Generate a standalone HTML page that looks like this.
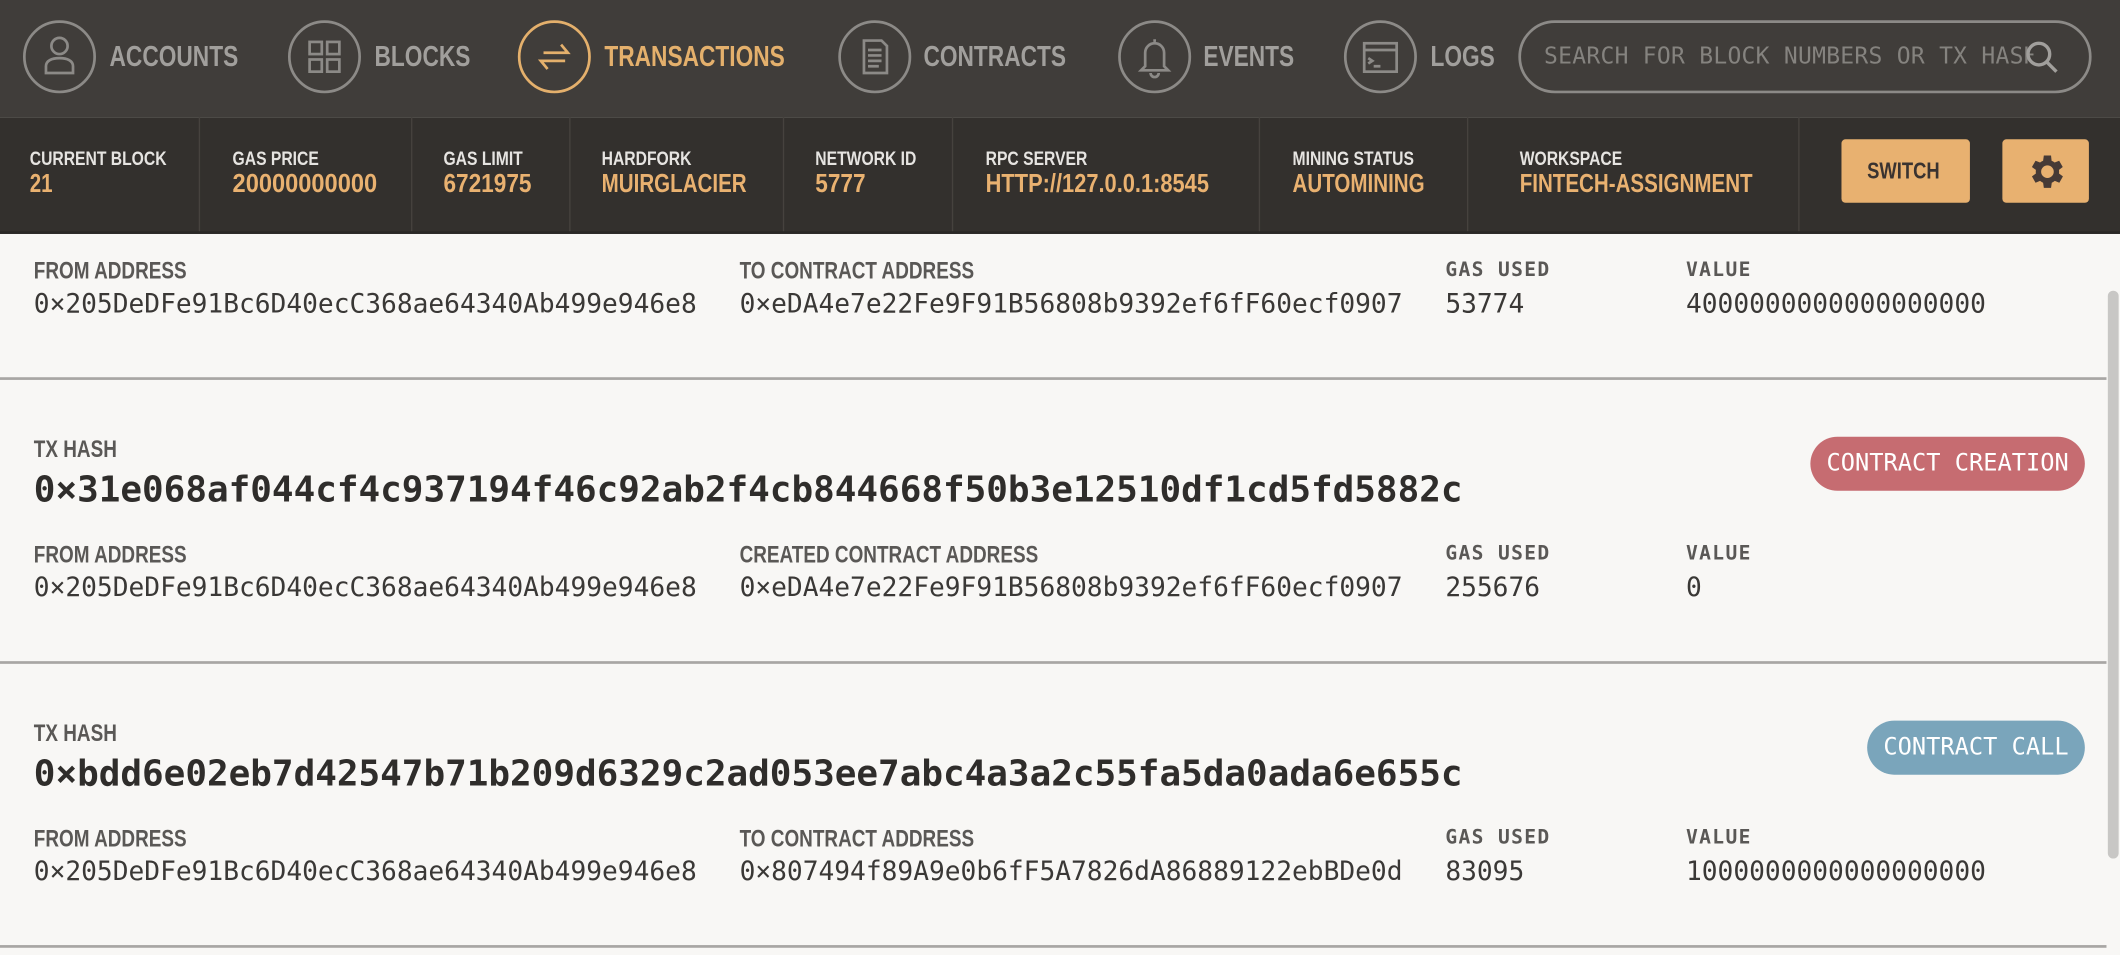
<!DOCTYPE html>
<html><head><meta charset="utf-8"><style>
html,body{margin:0;padding:0;width:2120px;height:954px;overflow:hidden;background:#f8f7f5}
#w{position:absolute;left:0;top:0;width:1568px;height:706px;transform:scale(1.35204);transform-origin:0 0;background:#f8f7f5}
.a{position:absolute;white-space:nowrap}
.nar{font-family:"Liberation Sans",sans-serif;font-weight:bold;transform:scaleX(0.8);transform-origin:0 0}
.mono{font-family:"DejaVu Sans Mono","Liberation Mono",monospace}
#nav{position:absolute;left:0;top:0;width:1568px;height:87px;background:#403d3a}
#stats{position:absolute;left:0;top:87px;width:1568px;height:84px;background:#33302d;border-bottom:2px solid #2a2826}
.circ{position:absolute;width:50px;height:50px;border:2px solid #8c8a87;border-radius:50%;top:15px}
.nl{top:31px;font-size:21px;color:#a19f9c}
.sl{top:110px;font-size:14.5px;color:#e6e4e1}
.sv{top:126px;font-size:19px;color:#e9b170}
.div{position:absolute;top:87px;width:1px;height:84px;background:#46423e}
.lab{font-size:17.5px;color:#5a5856}
.lab2{font-size:14.5px;font-weight:bold;color:#5a5856;letter-spacing:1px}
.val{font-size:19.4px;color:#3a3836}
.hash{font-size:26.6px;font-weight:bold;color:#2f2d2b}
.hr{position:absolute;left:0;width:1558px;height:2px;background:#a8a6a4}
.badge{position:absolute;height:40px;border-radius:20px;color:#fff;font-size:17.5px;line-height:40px;text-align:center}
</style></head><body><div id="w">
<div id="nav">
 <div class="circ" style="left:17px"></div>
 <svg class="a" style="left:17px;top:15px" width="54" height="54" viewBox="0 0 54 54" fill="none" stroke="#8c8a87" stroke-width="2"><circle cx="27" cy="19" r="6"/><path d="M17 39v-5c0-4 4-6 10-6s10 2 10 6v5z"/></svg>
 <div class="a nar nl" style="left:81px">ACCOUNTS</div>
 <div class="circ" style="left:213px"></div>
 <svg class="a" style="left:213px;top:15px" width="54" height="54" viewBox="0 0 54 54" fill="none" stroke="#8c8a87" stroke-width="2"><rect x="16" y="16" width="9" height="9"/><rect x="29" y="16" width="9" height="9"/><rect x="16" y="29" width="9" height="9"/><rect x="29" y="29" width="9" height="9"/></svg>
 <div class="a nar nl" style="left:277px">BLOCKS</div>
 <div class="circ" style="left:383px;border-color:#e4b06c"></div>
 <svg class="a" style="left:383px;top:15px" width="54" height="54" viewBox="0 0 54 54" fill="none" stroke="#e4b06c" stroke-width="2"><path d="M19 24h18l-5-6M35 30H17l5 6"/></svg>
 <div class="a nar nl" style="left:447px;color:#e4b06c">TRANSACTIONS</div>
 <div class="circ" style="left:620px"></div>
 <svg class="a" style="left:620px;top:15px" width="54" height="54" viewBox="0 0 54 54" fill="none" stroke="#8c8a87" stroke-width="2"><path d="M19 15h13l4 4v20H19z"/><path d="M22 22h10M22 26h10M22 30h10M22 34h8"/></svg>
 <div class="a nar nl" style="left:683px">CONTRACTS</div>
 <div class="circ" style="left:827px"></div>
 <svg class="a" style="left:827px;top:15px" width="54" height="54" viewBox="0 0 54 54" fill="none" stroke="#8c8a87" stroke-width="2"><path d="M27 14v2M20 34v-10a7 7 0 0 1 14 0v10l3 3H17z"/><path d="M24 39a3 3 0 0 0 6 0"/></svg>
 <div class="a nar nl" style="left:890px">EVENTS</div>
 <div class="circ" style="left:994px"></div>
 <svg class="a" style="left:994px;top:15px" width="54" height="54" viewBox="0 0 54 54" fill="none" stroke="#8c8a87" stroke-width="2"><rect x="15" y="17" width="24" height="21"/><path d="M15 22h24M18 28l3 2-3 2M22 34h5"/></svg>
 <div class="a nar nl" style="left:1058px">LOGS</div>
 <div class="a" style="left:1123px;top:15px;width:420px;height:50px;border:2px solid #8c8a87;border-radius:27px"></div>
 <div class="a mono" style="left:1142px;top:32px;font-size:17px;color:#85837f;width:362px;overflow:hidden;letter-spacing:0.2px">SEARCH FOR BLOCK NUMBERS OR TX HASHES</div>
 <svg class="a" style="left:1496px;top:28px" width="30" height="30" viewBox="0 0 30 30" fill="none" stroke="#a19f9c" stroke-width="2.5"><circle cx="12" cy="12" r="8"/><path d="M18 18l7 7"/></svg>
</div>
<div id="stats"></div>
<div class="div" style="left:147px"></div><div class="div" style="left:304px"></div><div class="div" style="left:421px"></div><div class="div" style="left:579px"></div><div class="div" style="left:704px"></div><div class="div" style="left:931px"></div><div class="div" style="left:1085px"></div><div class="div" style="left:1330px"></div>
<div class="a nar sl" style="left:22px">CURRENT BLOCK</div><div class="a nar sv" style="left:22px">21</div>
<div class="a nar sl" style="left:172px">GAS PRICE</div><div class="a nar sv" style="left:172px;transform:scaleX(0.92)">20000000000</div>
<div class="a nar sl" style="left:328px">GAS LIMIT</div><div class="a nar sv" style="left:328px;transform:scaleX(0.88)">6721975</div>
<div class="a nar sl" style="left:445px">HARDFORK</div><div class="a nar sv" style="left:445px">MUIRGLACIER</div>
<div class="a nar sl" style="left:603px">NETWORK ID</div><div class="a nar sv" style="left:603px;transform:scaleX(0.88)">5777</div>
<div class="a nar sl" style="left:729px">RPC SERVER</div><div class="a nar sv" style="left:729px;transform:scaleX(0.85)">HTTP://127.0.0.1:8545</div>
<div class="a nar sl" style="left:956px">MINING STATUS</div><div class="a nar sv" style="left:956px">AUTOMINING</div>
<div class="a nar sl" style="left:1124px">WORKSPACE</div><div class="a nar sv" style="left:1124px">FINTECH-ASSIGNMENT</div>
<div class="a" style="left:1362px;top:103px;width:95px;height:47px;background:#e8b170;border-radius:3px"></div>
<div class="a nar" style="left:1381px;top:117px;color:#3a3330;font-size:17px">SWITCH</div>
<div class="a" style="left:1481px;top:103px;width:64px;height:47px;background:#e8b170;border-radius:3px"></div>
<svg class="a" style="left:1497px;top:111px" width="32" height="32" viewBox="0 0 24 24"><path fill="#463a36" d="M19.4 13a7.5 7.5 0 0 0 0-2l2.1-1.6-2-3.5-2.5 1a7 7 0 0 0-1.7-1L15 3h-4l-.4 2.9a7 7 0 0 0-1.7 1l-2.5-1-2 3.5L6.6 11a7.5 7.5 0 0 0 0 2l-2.2 1.6 2 3.5 2.5-1a7 7 0 0 0 1.7 1L11 21h4l.4-2.9a7 7 0 0 0 1.7-1l2.5 1 2-3.5zM13 15.5a3.5 3.5 0 1 1 0-7 3.5 3.5 0 0 1 0 7z"/></svg>

<div class="a" style="left:1559px;top:215px;width:8px;height:420px;background:#c8c7c5;border-radius:4px"></div>

<div class="a nar lab" style="left:25px;top:190px">FROM ADDRESS</div>
<div class="a nar lab" style="left:547px;top:190px">TO CONTRACT ADDRESS</div>
<div class="a mono lab2" style="left:1069px;top:192px">GAS USED</div>
<div class="a mono lab2" style="left:1247px;top:192px">VALUE</div>
<div class="a mono val" style="left:25px;top:213px">0×205DeDFe91Bc6D40ecC368ae64340Ab499e946e8</div>
<div class="a mono val" style="left:547px;top:213px">0×eDA4e7e22Fe9F91B56808b9392ef6fF60ecf0907</div>
<div class="a mono val" style="left:1069px;top:213px">53774</div>
<div class="a mono val" style="left:1247px;top:213px">4000000000000000000</div>
<div class="hr" style="top:279px"></div>

<div class="a nar lab" style="left:25px;top:322px">TX HASH</div>
<div class="a mono hash" style="left:25px;top:347px">0×31e068af044cf4c937194f46c92ab2f4cb844668f50b3e12510df1cd5fd5882c</div>
<div class="badge mono" style="left:1339px;top:323px;width:203px;background:#c66c71">CONTRACT CREATION</div>
<div class="a nar lab" style="left:25px;top:400px">FROM ADDRESS</div>
<div class="a nar lab" style="left:547px;top:400px">CREATED CONTRACT ADDRESS</div>
<div class="a mono lab2" style="left:1069px;top:402px">GAS USED</div>
<div class="a mono lab2" style="left:1247px;top:402px">VALUE</div>
<div class="a mono val" style="left:25px;top:423px">0×205DeDFe91Bc6D40ecC368ae64340Ab499e946e8</div>
<div class="a mono val" style="left:547px;top:423px">0×eDA4e7e22Fe9F91B56808b9392ef6fF60ecf0907</div>
<div class="a mono val" style="left:1069px;top:423px">255676</div>
<div class="a mono val" style="left:1247px;top:423px">0</div>
<div class="hr" style="top:489px"></div>

<div class="a nar lab" style="left:25px;top:532px">TX HASH</div>
<div class="a mono hash" style="left:25px;top:557px">0×bdd6e02eb7d42547b71b209d6329c2ad053ee7abc4a3a2c55fa5da0ada6e655c</div>
<div class="badge mono" style="left:1381px;top:533px;width:161px;background:#7aa5bb">CONTRACT CALL</div>
<div class="a nar lab" style="left:25px;top:610px">FROM ADDRESS</div>
<div class="a nar lab" style="left:547px;top:610px">TO CONTRACT ADDRESS</div>
<div class="a mono lab2" style="left:1069px;top:612px">GAS USED</div>
<div class="a mono lab2" style="left:1247px;top:612px">VALUE</div>
<div class="a mono val" style="left:25px;top:633px">0×205DeDFe91Bc6D40ecC368ae64340Ab499e946e8</div>
<div class="a mono val" style="left:547px;top:633px">0×807494f89A9e0b6fF5A7826dA86889122ebBDe0d</div>
<div class="a mono val" style="left:1069px;top:633px">83095</div>
<div class="a mono val" style="left:1247px;top:633px">1000000000000000000</div>
<div class="hr" style="top:699px"></div>
</div></body></html>
